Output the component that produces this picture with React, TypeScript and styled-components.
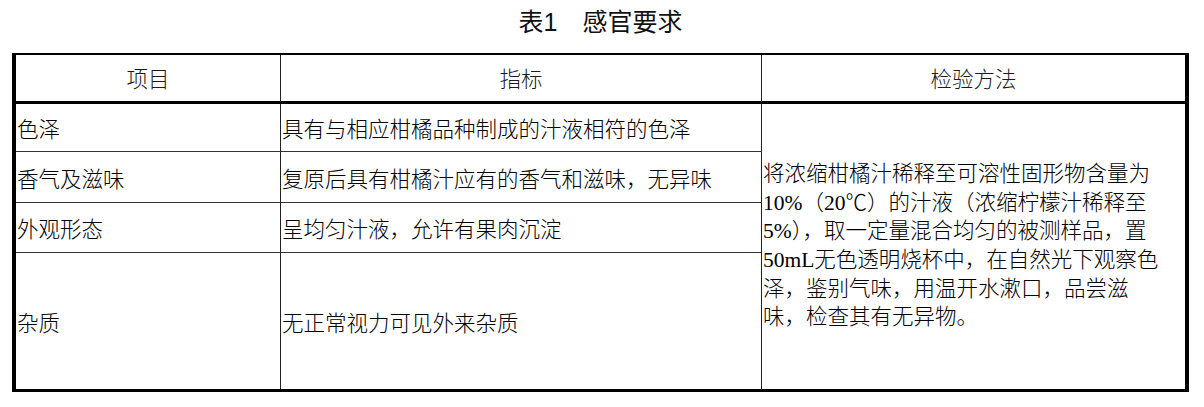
import { Fragment } from 'react';
import styled, { createGlobalStyle } from 'styled-components';

const GlobalStyle = createGlobalStyle`
  html, body {
    margin: 0;
    padding: 0;
    background: #fff;
  }
  body {
    width: 1204px;
    height: 407px;
    overflow: hidden;
  }
`;

const Page = styled.div`
  width: 1177px;
  margin: 0 15px 0 12px;
  color: #000;
`;

const Title = styled.h1`
  height: 53px;
  margin: 0;
  padding-top: 8px;
  box-sizing: border-box;
  display: flex;
  justify-content: center;
  gap: 25px;
  font-family: "Liberation Sans", "Noto Sans CJK SC", sans-serif;
  font-size: 25px;
  line-height: 28px;
  font-weight: 400;
  color: #111;
`;

const Frame = styled.div`
  border-top: 2px solid #000;
  border-left: 4px solid #000;
  border-right: 4px solid #000;
  border-bottom: 3px solid #000;
`;

const Grid = styled.div`
  display: grid;
  grid-template-columns: 265px 481px 423px;
  grid-template-rows: 49px 48px 51px 50px 136px;
  font-family: "Liberation Serif", "Noto Sans CJK SC", serif;
  font-size: 21.5px;
  font-weight: 300;
`;

const HeadCell = styled.div<{ $last?: boolean }>`
  box-sizing: border-box;
  display: flex;
  align-items: center;
  justify-content: center;
  border-bottom: 3px solid #000;
  border-right: ${(p) => (p.$last ? 'none' : '1px solid #222')};
  color: #1a1a1a;
  padding-bottom: 2px;
`;

const Cell = styled.div<{ $col: number; $row: number; $lastRow?: boolean }>`
  grid-column: ${(p) => p.$col};
  grid-row: ${(p) => p.$row};
  box-sizing: border-box;
  display: flex;
  align-items: center;
  padding-left: 1px;
  white-space: nowrap;
  border-right: 1px solid #222;
  border-bottom: ${(p) => (p.$lastRow ? 'none' : '1px solid #333')};
`;

const MethodCell = styled.div`
  grid-column: 3;
  grid-row: 2 / span 4;
  display: flex;
  flex-direction: column;
  justify-content: center;
  padding-left: 1px;
  line-height: 28.7px;
  padding-bottom: 1px;
`;

const MethodLine = styled.span`
  white-space: nowrap;
`;

const rows = [
  { item: '色泽', spec: '具有与相应柑橘品种制成的汁液相符的色泽' },
  { item: '香气及滋味', spec: '复原后具有柑橘汁应有的香气和滋味，无异味' },
  { item: '外观形态', spec: '呈均匀汁液，允许有果肉沉淀' },
  { item: '杂质', spec: '无正常视力可见外来杂质' },
];

const methodLines = [
  '将浓缩柑橘汁稀释至可溶性固形物含量为',
  '10%（20℃）的汁液（浓缩柠檬汁稀释至',
  '5%），取一定量混合均匀的被测样品，置',
  '50mL无色透明烧杯中，在自然光下观察色',
  '泽，鉴别气味，用温开水漱口，品尝滋',
  '味，检查其有无异物。',
];

export default function App() {
  return (
    <>
      <GlobalStyle />
      <Page>
        <Title>
          <span>表1</span>
          <span>感官要求</span>
        </Title>
        <Frame>
          <Grid>
            <HeadCell>项目</HeadCell>
            <HeadCell>指标</HeadCell>
            <HeadCell $last>检验方法</HeadCell>
            {rows.map((r, i) => (
              <Fragment key={r.item}>
                <Cell $col={1} $row={i + 2} $lastRow={i === rows.length - 1}>
                  {r.item}
                </Cell>
                <Cell $col={2} $row={i + 2} $lastRow={i === rows.length - 1}>
                  {r.spec}
                </Cell>
              </Fragment>
            ))}
            <MethodCell>
              {methodLines.map((l) => (
                <MethodLine key={l}>{l}</MethodLine>
              ))}
            </MethodCell>
          </Grid>
        </Frame>
      </Page>
    </>
  );
}
